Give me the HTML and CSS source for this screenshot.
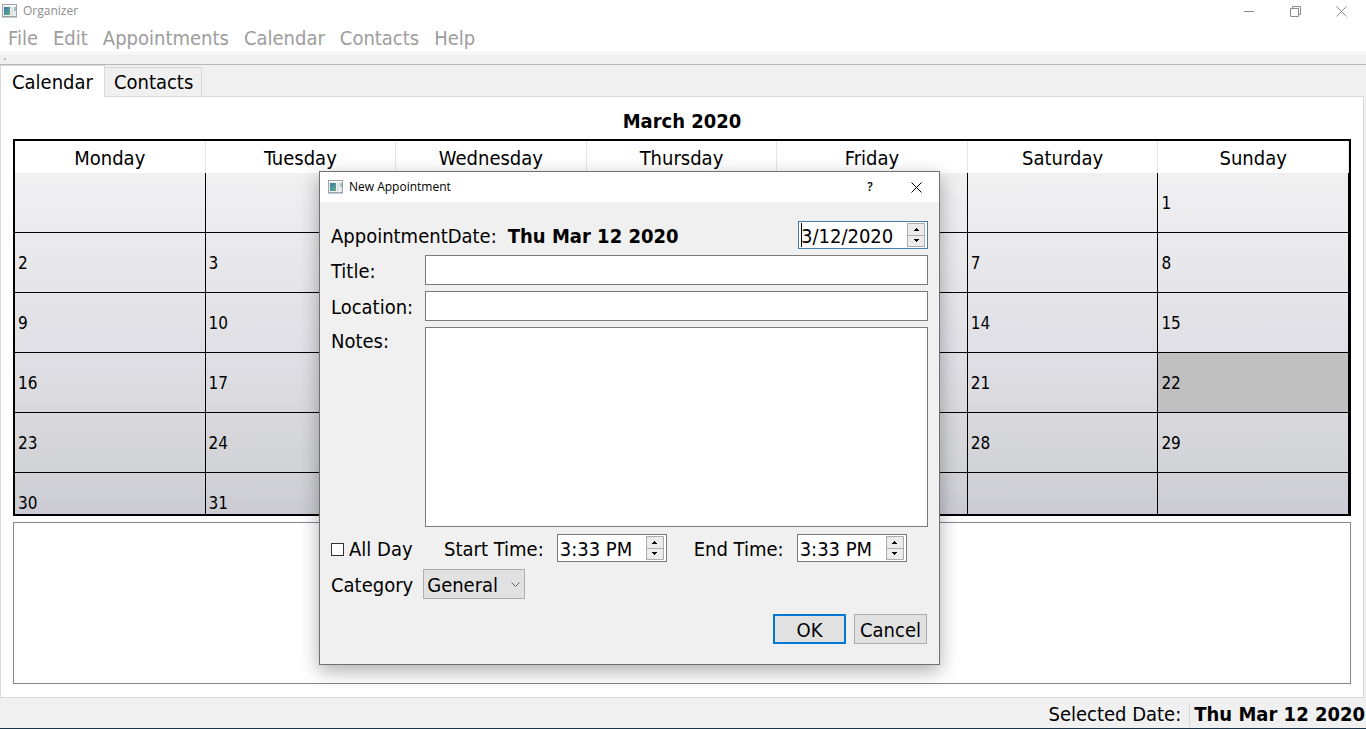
FILE: index.html
```html
<!DOCTYPE html>
<html lang="en">
<head>
<meta charset="utf-8">
<title>Organizer</title>
<link rel="stylesheet" href="styles.css">
</head>
<body>
<svg class="defs" aria-hidden="true">
  <defs>
    <linearGradient id="pane" x1="0" y1="0" x2="1" y2="1">
      <stop offset="0" stop-color="#3f74a8"/><stop offset="1" stop-color="#63b089"/>
    </linearGradient>
    <symbol id="app-icon" viewBox="0 0 15 14">
      <rect x="0.5" y="0.5" width="14" height="12" fill="#eef0f2" stroke="#9aa3ab"/>
      <path d="M0 13.5H15" stroke="#c9cdd1"/>
      <path d="M1 1.5H14" stroke="#fff"/>
      <rect x="2" y="3" width="6" height="8" fill="url(#pane)"/>
      <rect x="9" y="3" width="2" height="8" fill="#dcdfe2"/>
      <rect x="12" y="3" width="2" height="4" fill="#9cc5bd"/>
      <rect x="12" y="7" width="2" height="4" fill="#e2e6e8"/>
    </symbol>
    <symbol id="close" viewBox="0 0 11 11"><path d="M.5.5l10 10M10.5.5l-10 10" fill="none" stroke="currentColor"/></symbol>
    <symbol id="up" viewBox="0 0 5 3"><path d="M0 3V2H1V1H2V0H3V1H4V2H5V3Z" fill="currentColor"/></symbol>
    <symbol id="down" viewBox="0 0 5 3"><path d="M0 0V1H1V2H2V3H3V2H4V1H5V0Z" fill="currentColor"/></symbol>
  </defs>
</svg>
<div class="window">
  <header class="titlebar">
    <svg class="app-icon" aria-hidden="true"><use href="#app-icon"/></svg>
    <span class="caption">Organizer</span>
    <div class="window-buttons">
      <button type="button" aria-label="Minimize"><svg viewBox="0 0 11 11"><path d="M0 5.5H10" stroke="currentColor"/></svg></button>
      <button type="button" aria-label="Restore"><svg viewBox="0 0 11 11"><path d="M.5 2.5H8.500V10.500H.5ZM2.500 2.500V.5H10.500V8.500H8.500" fill="none" stroke="currentColor"/></svg></button>
      <button type="button" aria-label="Close"><svg><use href="#close"/></svg></button>
    </div>
  </header>
  <nav class="menubar">
    <a href="#">File</a><a href="#">Edit</a><a href="#">Appointments</a><a href="#">Calendar</a><a href="#">Contacts</a><a href="#">Help</a>
  </nav>
  <div class="toolbar"><span class="grip"></span></div>
  <div class="tabs" role="tablist">
    <button type="button" class="tab active" role="tab" aria-selected="true">Calendar</button>
    <button type="button" class="tab" role="tab" aria-selected="false">Contacts</button>
  </div>
  <main class="panel">
    <h1 class="month">March 2020</h1>
    <div class="calendar">
      <table>
        <thead><tr><th>Monday</th><th>Tuesday</th><th>Wednesday</th><th>Thursday</th><th>Friday</th><th>Saturday</th><th>Sunday</th></tr></thead>
        <tbody>
          <tr><td></td><td></td><td></td><td></td><td></td><td></td><td>1</td></tr>
          <tr><td>2</td><td>3</td><td>4</td><td>5</td><td>6</td><td>7</td><td>8</td></tr>
          <tr><td>9</td><td>10</td><td>11</td><td>12</td><td>13</td><td>14</td><td>15</td></tr>
          <tr><td>16</td><td>17</td><td>18</td><td>19</td><td>20</td><td>21</td><td class="today">22</td></tr>
          <tr><td>23</td><td>24</td><td>25</td><td>26</td><td>27</td><td>28</td><td>29</td></tr>
          <tr><td>30</td><td>31</td><td></td><td></td><td></td><td></td><td></td></tr>
        </tbody>
      </table>
    </div>
    <div class="agenda"></div>
  </main>
  <footer class="statusbar"><span>Selected Date:</span><strong>Thu Mar 12 2020</strong></footer>
</div>

<form class="dialog" role="dialog" aria-labelledby="dialog-title">
  <div class="dialog-bar">
    <svg class="app-icon" aria-hidden="true"><use href="#app-icon"/></svg>
    <span class="caption" id="dialog-title">New Appointment</span>
    <button type="button" class="help" aria-label="Help">?</button>
    <button type="button" aria-label="Close"><svg><use href="#close"/></svg></button>
  </div>
  <div class="dialog-body">
    <div class="line date-line">
      <label for="date">AppointmentDate:</label>
      <strong>Thu Mar 12 2020</strong>
      <div class="spin date focused">
        <span class="caret"></span>
        <input id="date" type="text" value="3/12/2020">
        <div class="steps"><button type="button" aria-label="Later date"><svg><use href="#up"/></svg></button><button type="button" aria-label="Earlier date"><svg><use href="#down"/></svg></button></div>
      </div>
    </div>
    <div class="fields">
      <label for="title">Title:</label><input class="field" id="title" type="text">
      <label for="location">Location:</label><input class="field" id="location" type="text">
      <label for="notes">Notes:</label><textarea class="field" id="notes"></textarea>
    </div>
    <div class="line time-line">
      <label class="check"><input type="checkbox">All Day</label>
      <label class="time-label" for="start">Start Time:</label>
      <div class="spin">
        <input id="start" type="text" value="3:33 PM">
        <div class="steps"><button type="button" aria-label="Later start"><svg><use href="#up"/></svg></button><button type="button" aria-label="Earlier start"><svg><use href="#down"/></svg></button></div>
      </div>
      <label class="time-label" for="end">End Time:</label>
      <div class="spin">
        <input id="end" type="text" value="3:33 PM">
        <div class="steps"><button type="button" aria-label="Later end"><svg><use href="#up"/></svg></button><button type="button" aria-label="Earlier end"><svg><use href="#down"/></svg></button></div>
      </div>
    </div>
    <div class="line category-line">
      <label for="category">Category</label>
      <div class="combo">
        <select id="category"><option>General</option></select>
        <svg viewBox="0 0 9 5" aria-hidden="true"><path d="M.5.5l4 4 4-4" fill="none" stroke="#606060"/></svg>
      </div>
    </div>
    <div class="actions">
      <button type="submit" class="default">OK</button>
      <button type="button">Cancel</button>
    </div>
  </div>
</form>
</body>
</html>
```
FILE: styles.css
```css
* { box-sizing: border-box; }

body {
  margin: 0;
  background: #f0f0f0;
  color: #000;
  font: 20px/24px "DejaVu Sans Condensed", "Noto Sans", sans-serif;
}

button, input, select, textarea {
  margin: 0;
  padding: 0;
  border: 0;
  border-radius: 0;
  outline: 0;
  background: none;
  color: inherit;
  font: inherit;
}

svg { display: block; }
.defs { position: absolute; width: 0; height: 0; }

.window {
  display: flex;
  flex-direction: column;
  height: 100vh;
  border-bottom: 1px solid #1d3446;
}

/* Title bar and menus */
.titlebar {
  display: flex;
  align-items: center;
  flex: none;
  height: 22px;
  padding: 0 2px;
  background: #fff;
  color: #8c8c8c;
}
.app-icon { width: 15px; height: 14px; flex: none; }
.caption { font: 12px/16px "Open Sans", "Noto Sans", sans-serif; margin-left: 6px; }
.titlebar .caption { flex: 1; }
.window-buttons { display: flex; }
.window-buttons button { display: grid; place-items: center; width: 46px; height: 20px; }
.window-buttons svg, .dialog-bar button svg { width: 11px; height: 11px; }

.menubar {
  display: flex;
  align-items: center;
  gap: 15px;
  flex: none;
  height: 31px;
  padding: 2px 8px 0;
  background: #fff;
  border-bottom: 1px solid #f0f0f0;
}
.menubar a { color: #9d9d9d; text-decoration: none; }

.toolbar {
  flex: none;
  height: 12px;
  padding: 4px;
  border-top: 1px solid #fff;
  border-bottom: 1px solid #b8b8b8;
}
.grip { display: block; width: 2px; height: 2px; background: #bdbdbd; }

/* Tabs */
.tabs { display: flex; align-items: flex-end; flex: none; height: 31px; }
.tab {
  height: 29px;
  padding: 0 8px 0 9px;
  border: 1px solid #d9d9d9;
  border-bottom: 0;
  border-left: 0;
}
.tab.active {
  position: relative;
  height: 32px;
  margin-bottom: -1px;
  padding: 0 11px;
  border-left: 1px solid #d9d9d9;
  background: #fff;
}

.panel {
  display: flex;
  flex-direction: column;
  flex: 1;
  min-height: 0;
  margin-right: 2px;
  padding: 12px 12px 13px;
  border: 1px solid #d9d9d9;
  background: #fff;
}
.month { margin: 0 0 6px; font-size: 20px; line-height: 24px; text-align: center; }

/* Month grid */
.calendar {
  flex: 377 1 0;
  min-height: 0;
  overflow: hidden;
  border: 2px solid #000;
  background: linear-gradient(#f0f0f1 32px, #e0dfe5 211px, #d9d9dd 271px, #d2d3d6 331px, #cccbd5);
}
.calendar table { width: 100%; table-layout: fixed; border-spacing: 0; }
.calendar th {
  height: 32px;
  padding: 2px 0 0;
  border-right: 1px solid #e5e5e5;
  background: #fff;
  font-weight: normal;
}
.calendar td {
  height: 60px;
  padding: 0 3px;
  border-right: 1px solid #000;
  border-bottom: 1px solid #000;
  font-size: 17px;
}
.calendar .today { background: #c0c0c0; }

.agenda { flex: 162 1 0; margin-top: 6px; border: 1px solid #828790; }

.statusbar { display: flex; justify-content: flex-end; flex: none; height: 30px; padding: 4px 1px 2px; }
.statusbar strong { margin-left: 8px; padding-left: 4px; border-left: 1px solid #d7d7d7; }

/* Appointment dialog */
.dialog {
  position: absolute;
  top: 171px;
  left: 319px;
  width: 621px;
  border: 1px solid #707070;
  background: #f0f0f0;
  box-shadow: 0 6px 18px rgba(0, 0, 0, .32);
}
.dialog-bar { display: flex; align-items: center; height: 30px; padding-left: 8px; background: #fff; }
.dialog-bar .caption { flex: 1; }
.dialog-bar button { display: grid; place-items: center; width: 46px; height: 28px; }
.dialog-bar .help { font: 600 12px/16px "Open Sans", "Noto Sans", sans-serif; }
.dialog-body { padding: 19px 11px 20px; }
.line { display: flex; align-items: center; }
.line > label, .line > strong, .fields label { padding-top: 2px; }
.date-line strong { margin-left: 11px; }
.date-line .spin { margin-left: auto; }

.fields { display: grid; grid-template-columns: 94px 1fr; gap: 6px 0; align-items: center; margin: 6px 0 7px; }
.field { width: 100%; height: 30px; padding: 0 4px; border: 1px solid #7a7a7a; background: #fff; }
.fields textarea { display: block; height: 200px; resize: none; }
.fields label[for="notes"] { align-self: start; }

.spin { position: relative; display: flex; width: 110px; height: 28px; padding: 1px; border: 1px solid #7a7a7a; background: #fff; }
.spin.date { width: 130px; }
.spin.focused { border-color: #4a7ba6; }
.spin input { flex: 1; min-width: 0; padding: 2px 0 0 1px; }
.caret { position: absolute; top: 1px; left: 2px; width: 1px; height: 24px; background: #000; }
.steps { display: flex; flex-direction: column; width: 18px; margin-right: 1px; border: 1px solid #adadad; }
.steps button { display: grid; place-items: center; flex: 1; background: #ececec; }
.steps button + button { border-top: 1px solid #adadad; }
.steps svg { width: 5px; height: 3px; }

.time-line { gap: 0 13px; }
.check { display: flex; align-items: center; gap: 5px; width: 100px; }
.check input { appearance: none; width: 13px; height: 13px; border: 1px solid #333; background: #fff; }
.check input:checked { background: #333; }
.time-label + .spin + .time-label { margin-left: 14px; }

.category-line { margin-top: 7px; gap: 10px; }
.combo { display: grid; align-items: center; width: 102px; height: 30px; }
.combo select, .combo svg { grid-area: 1 / 1; }
.combo select { appearance: none; width: 100%; height: 100%; padding: 1px 3px 0; border: 1px solid #adadad; background: #e1e1e1; }
.combo svg { justify-self: end; width: 9px; height: 5px; margin-right: 5px; pointer-events: none; }

.actions { display: flex; justify-content: flex-end; gap: 8px; margin-top: 15px; padding-right: 1px; }
.actions button { width: 73px; height: 30px; padding-top: 1px; border: 1px solid #adadad; background: #e1e1e1; }
.actions .default { border: 2px solid #0078d7; }
```
